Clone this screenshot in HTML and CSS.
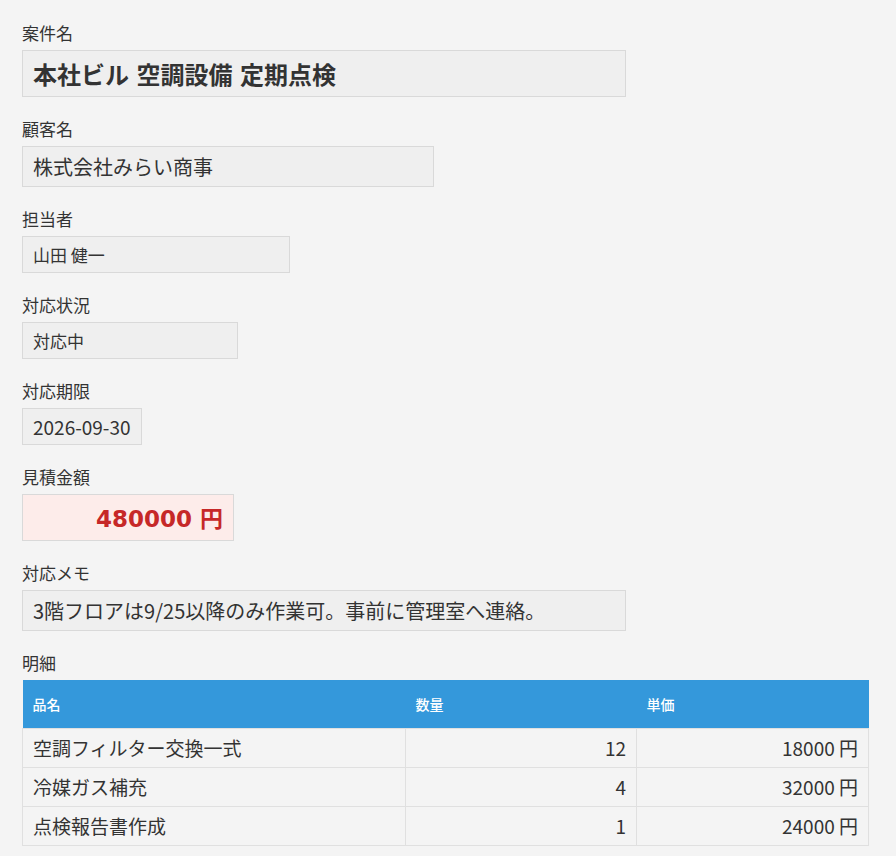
FILE: index.html
```html
<!DOCTYPE html>
<html lang="ja">
<head>
  <meta charset="UTF-8" />
  <meta name="viewport" content="width=device-width, initial-scale=1.0">
  <title>案件詳細</title>
  <link rel="stylesheet" href="styles.css">
</head>
<body>
  <div class="sheet">
    <div class="field">
      <div class="label">案件名</div>
      <div class="value value-title">本社ビル 空調設備 定期点検</div>
    </div>
    <div class="field">
      <div class="label">顧客名</div>
      <div class="value value-customer">株式会社みらい商事</div>
    </div>
    <div class="field">
      <div class="label">担当者</div>
      <div class="value value-small value-owner">山田 健一</div>
    </div>
    <div class="field">
      <div class="label">対応状況</div>
      <div class="value value-small value-status">対応中</div>
    </div>
    <div class="field">
      <div class="label">対応期限</div>
      <div class="value value-date">2026-09-30</div>
    </div>
    <div class="field">
      <div class="label">見積金額</div>
      <div class="value value-amount">480000 円</div>
    </div>
    <div class="field">
      <div class="label">対応メモ</div>
      <div class="value value-memo">3階フロアは9/25以降のみ作業可。事前に管理室へ連絡。</div>
    </div>
    <div class="field">
      <div class="label">明細</div>
      <table class="items">
        <colgroup>
          <col class="col-name">
          <col class="col-qty">
          <col class="col-price">
        </colgroup>
        <thead>
          <tr>
            <th>品名</th>
            <th>数量</th>
            <th>単価</th>
          </tr>
        </thead>
        <tbody>
          <tr>
            <td>空調フィルター交換一式</td>
            <td class="num">12</td>
            <td class="num">18000 円</td>
          </tr>
          <tr>
            <td>冷媒ガス補充</td>
            <td class="num">4</td>
            <td class="num">32000 円</td>
          </tr>
          <tr>
            <td>点検報告書作成</td>
            <td class="num">1</td>
            <td class="num">24000 円</td>
          </tr>
        </tbody>
      </table>
    </div>
  </div>
</body>
</html>
```

FILE: styles.css
```css
body {
  margin: 0;
  padding: 20px 27px 0 22px;
  background-color: #f4f4f4;
  color: #333333;
  font-family: "Noto Sans CJK JP", "Noto Sans", sans-serif;
}
.field {
  margin-bottom: 19px;
}
.label {
  font-size: 17px;
  margin-bottom: 5px;
}
.value {
  box-sizing: border-box;
  background-color: #efefef;
  border: 1px solid #d9d9d9;
  padding: 5px 10px;
  font-size: 20px;
}
.value-title {
  width: 604px;
  font-size: 24px;
  font-weight: bold;
  word-spacing: 2px;
}
.value-customer {
  width: 412px;
}
.value-small {
  font-size: 17px;
}
.value-owner {
  width: 268px;
}
.value-status {
  width: 216px;
}
.value-date {
  display: inline-block;
  font-size: 19px;
  padding: 4px 10px;
}
.value-amount {
  width: 212px;
  padding-bottom: 6px;
  font-family: "DejaVu Sans", "Noto Sans CJK JP", sans-serif;
  font-size: 23px;
  font-weight: bold;
  text-align: right;
  color: #c62828;
  background-color: #fdecea;
}
.value-memo {
  width: 604px;
}
.items {
  width: 847px;
  border-collapse: collapse;
  table-layout: fixed;
}
.items .col-name {
  width: 383px;
}
.items .col-qty {
  width: 231px;
}
.items th {
  background-color: #3498db;
  color: white;
  font-size: 14px;
  font-weight: 500;
  text-align: left;
  padding: 14px 10px;
}
.items td {
  border: 1px solid #e0e0e0;
  padding: 5px 10px 6px;
  font-size: 19px;
}
.items td.num {
  text-align: right;
}
```
